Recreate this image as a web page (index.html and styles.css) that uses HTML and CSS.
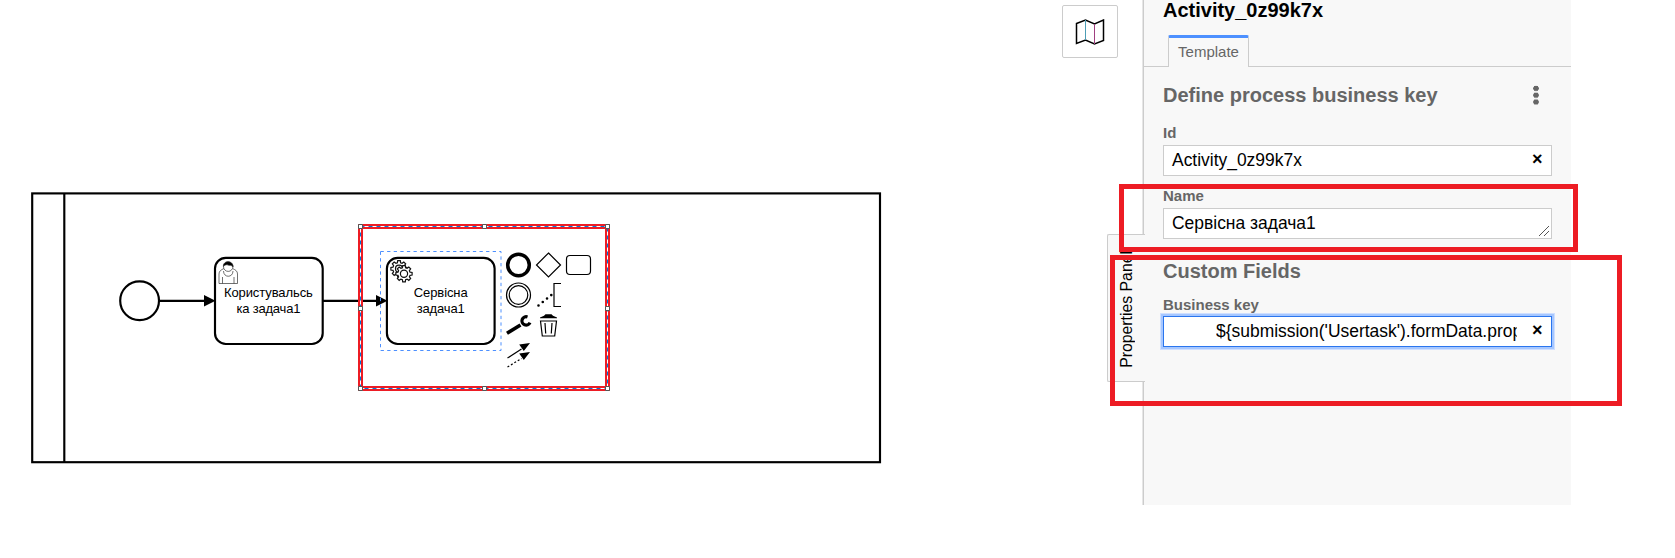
FILE: index.html
```html
<!DOCTYPE html>
<html lang="uk">
<head>
<meta charset="utf-8">
<title>Process modeler</title>
<link rel="stylesheet" href="styles.css">
</head>
<body>
<div class="modeler">
  <main class="canvas">
    <svg class="diagram" width="1143" height="558" viewBox="0 0 1143 558">
      <defs>
        <path id="gear" d="M6-1.600L8.100-1.300V1.300L6 1.600 5.400 3.100 6.650 4.800 4.800 6.650 3.100 5.400 1.600 6 1.300 8.100H-1.300L-1.600 6-3.100 5.400-4.800 6.650-6.650 4.800-5.400 3.100-6 1.600-8.100 1.300V-1.300L-6-1.600-5.400-3.100-6.650-4.800-4.800-6.650-3.100-5.400-1.600-6-1.300-8.100H1.300L1.600-6 3.100-5.400 4.800-6.650 6.650-4.800 5.400-3.100z"/>
      </defs>
      <g class="shape">
        <rect x="32.2" y="193.4" width="847.8" height="268.8"/>
        <path d="M64.3 193.4V462.2"/>
        <circle cx="139.6" cy="300.8" r="19.4"/>
        <path d="M159 300.8H206M323 300.8H378"/>
        <rect x="215" y="257.8" width="107.7" height="86.2" rx="10.8"/>
        <rect x="386.9" y="257.8" width="107.7" height="86.2" rx="10.8"/>
      </g>
      <path d="M204 295l11.5 5.8-11.5 5.8zM376 295l11.5 5.8-11.5 5.8z"/>
      <g class="user-icon">
        <path d="M224 268.5c-3 1.400-5 2.500-5 5.500v9.500h18.500v-9.500c0-3-2-4.100-5-5.500M222.500 277v6.500M234 277v6.500"/>
        <path d="M223.500 271c0 7 9.500 7 9.500 0"/>
        <circle cx="228.200" cy="266.700" r="4.700"/>
        <path class="solid" d="M223.400 266.500c-.5-6.500 10-6.500 9.700.5-2-2.500-3.500-1-5-2-2-.8-3.500.3-4.700 1.500z"/>
      </g>
      <g class="gear-icon">
        <use href="#gear" x="399" y="268.700"/><circle cx="399" cy="268.700" r="3.500"/>
        <use href="#gear" x="404" y="273.700"/><circle cx="404" cy="273.700" r="3.600"/>
      </g>
      <g class="task-label">
        <text x="268.400" y="296.800" textLength="89">Користувальсь</text>
        <text x="268.400" y="312.800" textLength="64">ка задача1</text>
        <text x="440.700" y="296.800" textLength="54">Сервісна</text>
        <text x="440.700" y="312.800" textLength="48">задача1</text>
      </g>
      <rect class="outline" x="380.500" y="251.500" width="120.500" height="99"/>
      <g class="pad">
        <circle class="thick" cx="518.500" cy="265" r="10.800"/>
        <path d="M548.500 253l12 12-12 12-12-12z"/>
        <rect x="566.500" y="255.500" width="24" height="19" rx="3.500"/>
        <circle cx="518.500" cy="295" r="12"/><circle cx="518.500" cy="295" r="9.300"/>
        <path d="M561 283.500h-7v23h7"/>
        <path class="dots" d="M538.500 305.500L552 294.500"/>
        <path class="handle" d="M507 333.200l13.500-8.200"/>
        <path class="jaw" d="M527.500 316.900A4.200 4.200 0 1 0 530 322.600"/>
        <path d="M540.500 321l1.800 15h12.400l1.800-15zM545 323l.7 10.500M552 323l-.7 10.500"/>
        <path class="solid" d="M540 317.500l4-1.800 1.500-1.500h6l1.500 1.500 4 1.800v.8h-17z"/>
        <path d="M507.500 358l14-9"/><path class="fine" d="M507.500 367l14-8.500"/>
        <path class="solid" d="M530 343l-6.200 8-4.600-6.500zM530 352l-6.200 8-4.600-6.500z"/>
      </g>
      <rect class="callout" x="360.500" y="226.500" width="247" height="162"/>
      <rect class="callout-base" x="360.500" y="226.500" width="247" height="162"/>
      <rect class="callout-dash" x="360.500" y="226.500" width="247" height="162"/>
      <g class="handles">
        <path d="M358.500 224.500h4v4h-4zM482.500 224.500h4v4h-4zM605.500 224.500h4v4h-4zM358.500 306.500h4v4h-4zM605.500 306.500h4v4h-4zM358.500 386.500h4v4h-4zM482.500 386.500h4v4h-4zM605.500 386.500h4v4h-4z"/>
      </g>
    </svg>
    <button class="map-toggle" aria-label="Minimap">
      <svg width="30" height="26" viewBox="0 0 30 26"><path d="M1.500 4.500L10.500 1l9 4 9-4v20.500l-9 3.500-9-4-9 3.500z"/><path class="fold-a" d="M10.500 1v20"/><path class="fold-b" d="M19.500 5v20"/></svg>
    </button>
  </main>
  <aside class="panel">
    <div class="panel-toggle"><span>Properties Panel</span></div>
    <header class="panel-title"><span>Activity_0z99k7x</span></header>
    <nav class="tabs"><a class="tab">Template</a></nav>
    <section class="fields">
      <div class="heading"><h2>Define process business key</h2><i class="menu"></i></div>
      <label>Id</label>
      <div class="input"><span>Activity_0z99k7x</span><b class="clear">×</b></div>
      <label>Name</label>
      <div class="input"><span>Сервісна задача1</span>
        <svg class="grip" width="10" height="10" viewBox="0 0 10 10"><path d="M0 10L10 0M5 10l5-5"/></svg>
      </div>
      <h2 class="custom">Custom Fields</h2>
      <label class="tight">Business key</label>
      <div class="input focused"><span class="expression">${submission('Usertask').formData.prop</span><b class="clear">×</b></div>
    </section>
  </aside>
  <div class="mark mark-name"></div>
  <div class="mark mark-custom"></div>
</div>
</body>
</html>
```
FILE: styles.css
```css
* { box-sizing: border-box; }
body { margin: 0; background: #fff; font-family: "Liberation Sans", Arial, sans-serif; color: #000; }
.modeler { position: relative; display: flex; width: 1675px; height: 558px; overflow: hidden; }
.canvas { position: relative; width: 1143px; flex: none; }
.diagram { display: block; }
.shape { fill: #fff; stroke: #000; stroke-width: 2.15; }
.user-icon { fill: #fff; stroke: #333; stroke-width: .7; }
.user-icon .solid { fill: #000; }
.gear-icon { fill: #fff; stroke: #111; stroke-width: 1.200; }
.task-label { font-size: 13px; text-anchor: middle; }
.outline { fill: none; stroke: #4d90ff; stroke-width: 1; stroke-dasharray: 3.300 3.300; }
.pad { fill: none; stroke: #000; stroke-width: 1.200; }
.pad .thick { stroke-width: 3.500; }
.pad .dots { stroke-width: 2.600; stroke-linecap: round; stroke-dasharray: 0 5.500; }
.pad .handle { stroke-width: 3.600; }
.pad .jaw { stroke-width: 3.200; }
.pad .fine { stroke-dasharray: 2 2; }
.pad .solid { fill: #000; stroke: none; }
.callout { fill: none; stroke: #ed1c24; stroke-width: 5; }
.callout-base { fill: none; stroke: #fff; stroke-width: 1; }
.callout-dash { fill: none; stroke: #0078d7; stroke-width: 1; stroke-dasharray: 4 4; }
.handles { fill: #fff; stroke: #555; stroke-width: 1; }
.map-toggle { position: absolute; left: 1062px; top: 5px; width: 56px; height: 53px; padding: 0; display: flex; align-items: center; justify-content: center; background: #fff; border: 1px solid #ccc; border-radius: 2px; }
.map-toggle svg { fill: none; stroke: #000; stroke-width: 1.500; }
.map-toggle .fold-a { stroke: #4c9db5; stroke-width: 1; }
.map-toggle .fold-b { stroke: #a03f80; stroke-width: 1; }
.panel { position: relative; width: 428px; height: 505px; flex: none; background: #f8f8f8; border-left: 1px solid #ccc; box-shadow: -1px 0 0 #e6e6e6; }
.panel-toggle { position: absolute; left: -37px; top: 234px; width: 38px; height: 148px; background: #f8f8f8; border: 1px solid #ccc; border-right: 0; border-radius: 2px 0 0 2px; display: flex; align-items: center; justify-content: center; }
.panel-toggle span { margin-top: 2px; writing-mode: vertical-rl; transform: rotate(180deg); font-size: 15.800px; white-space: nowrap; }
.panel-title { height: 35px; padding: 0 19px; font-size: 20px; font-weight: bold; line-height: 20px; }
.tabs { height: 32px; padding-left: 24px; border-bottom: 1px solid #ccc; }
.tab { display: block; width: 81px; height: 32px; border: 1px solid #ccc; border-top: 3px solid #4d90ff; border-bottom: 0; border-radius: 2px 2px 0 0; background: #f8f8f8; color: #666; font-size: 15px; line-height: 28px; text-align: center; }
.fields { padding: 16px 19px 0; color: #666; }
.heading { display: flex; justify-content: space-between; height: 42px; }
h2 { margin: 0; font-size: 20px; line-height: 24px; white-space: nowrap; }
.menu { width: 6px; height: 20px; margin: 2px 13px 0 0; background: radial-gradient(circle, #666 2.500px, transparent 3px) 0 0 / 6px 6.800px; }
label { display: block; height: 20px; font-size: 15px; font-weight: bold; line-height: 15px; }
.tight { height: 19px; }
.input { display: flex; justify-content: space-between; align-items: flex-start; width: 389px; height: 31px; margin-bottom: 12px; padding: 0 8px; background: #fff; border: 1px solid #ccc; color: #000; font-size: 17.450px; line-height: 29px; white-space: nowrap; }
.clear { width: 11px; font-size: 18px; line-height: 27px; }
.grip { align-self: flex-end; margin: 0 -6px 2px 0; stroke: #555; stroke-width: 1; }
.custom { height: 38px; margin-top: 20px; }
.focused { border-color: #2a75ee; box-shadow: 0 0 0 2px #a6c7ff, 0 0 0 3px #cfdfff; }
.expression { margin-left: 44px; width: 301px; overflow: hidden; }
.mark { position: absolute; border: 5px solid #ed1c24; }
.mark-name { left: 1119px; top: 184px; width: 459px; height: 68px; }
.mark-custom { left: 1110px; top: 255px; width: 512px; height: 151px; }
```
